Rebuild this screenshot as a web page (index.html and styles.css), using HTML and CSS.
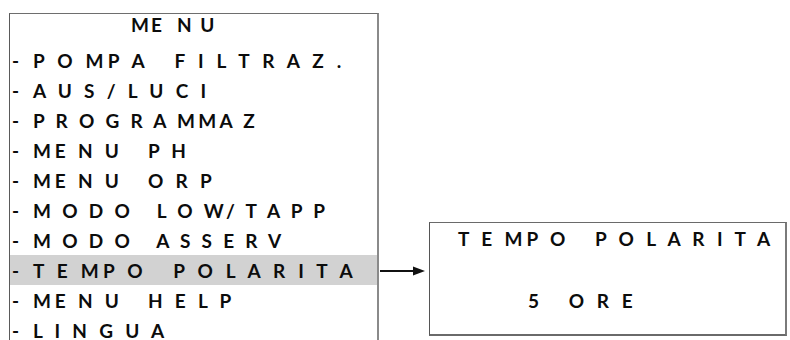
FILE: index.html
```html
<!DOCTYPE html>
<html lang="it">
<head>
<meta charset="utf-8">
<title>Menu</title>
<link rel="stylesheet" href="styles.css">
</head>
<body>
<div class="stage">
  <div class="menu">
    <div class="title"><span class="txt">ME  N U</span></div>
    <ul class="items">
      <li class="item"><span class="dash">-</span><span class="label label-wide">P O MP A   F I L T R A Z .</span></li>
      <li class="item"><span class="dash">-</span><span class="label">A U S / L U C I</span></li>
      <li class="item"><span class="dash">-</span><span class="label label-tight">P R O G R A MMA Z</span></li>
      <li class="item"><span class="dash">-</span><span class="label">ME N U   P H</span></li>
      <li class="item"><span class="dash">-</span><span class="label">ME N U   O R P</span></li>
      <li class="item"><span class="dash">-</span><span class="label label-tight">M O D O   L O W/ T A P P</span></li>
      <li class="item"><span class="dash">-</span><span class="label label-tight">M O D O   A S S E R V</span></li>
      <li class="item item-active"><span class="dash">-</span><span class="label label-wide">T E MP O   P O L A R I T A</span></li>
      <li class="item"><span class="dash">-</span><span class="label">ME N U   H E L P</span></li>
      <li class="item"><span class="dash">-</span><span class="label">L I N G U A</span></li>
    </ul>
  </div>
  <div class="detail-wrap">
    <svg class="arrow" width="50" height="12" viewBox="0 0 50 12" aria-hidden="true">
      <line x1="1" y1="6" x2="36" y2="6" stroke="#111" stroke-width="2"/>
      <polygon points="34,1.5 46,6 34,10.5" fill="#111"/>
    </svg>
    <div class="detail">
      <div class="detail-title">T E MP O   P O L A R I T A</div>
      <div class="detail-value">5   O R E</div>
    </div>
  </div>
</div>
</body>
</html>
```

FILE: styles.css
```css
html, body {
  margin: 0;
  padding: 0;
  background: #ffffff;
}

body {
  font-family: Lato, "Open Sans", sans-serif;
  font-weight: 700;
  color: #0c0c0c;
  width: 790px;
  height: 340px;
  overflow: hidden;
}

.stage {
  display: flex;
  align-items: flex-start;
}

.menu {
  margin: 13px 0 0 9px;
  width: 367px;
  height: 327px;
  border-top: 1px solid #6e6e6e;
  border-left: 1px solid #5a5a5a;
  border-right: 2px solid #8a8a8a;
  overflow: hidden;
}

.title {
  height: 22px;
  line-height: 22px;
  padding-left: 121px;
  font-size: 19px;
}

.txt {
  letter-spacing: 2px;
  white-space: pre;
}

.items {
  list-style: none;
  margin: 9px 0 0 0;
  padding: 0;
}

.item {
  display: flex;
  align-items: center;
  height: 30px;
  font-size: 19px;
}

.item-active {
  background: #d2d2d2;
}

.dash {
  width: 23px;
  padding-left: 2px;
  box-sizing: border-box;
}

.label {
  letter-spacing: 3.8px;
  white-space: pre;
}

.label-wide {
  letter-spacing: 4.2px;
}

.label-tight {
  letter-spacing: 3.3px;
}

.detail-wrap {
  display: flex;
  align-items: flex-start;
  margin-top: 222px;
}

.arrow {
  display: block;
  margin-top: 43px;
}

.detail {
  width: 358px;
  height: 114px;
  border-top: 1px solid #6a6a6a;
  border-left: 1px solid #555555;
  border-right: 2px solid #7a7a7a;
  border-bottom: 2px solid #6a6a6a;
  padding: 5px 0 0 28px;
  box-sizing: border-box;
  font-size: 19px;
}

.detail-title {
  line-height: 22px;
  letter-spacing: 3.9px;
  white-space: pre;
}

.detail-value {
  line-height: 22px;
  margin-top: 40px;
  padding-left: 70px;
  letter-spacing: 4px;
  white-space: pre;
}
```
